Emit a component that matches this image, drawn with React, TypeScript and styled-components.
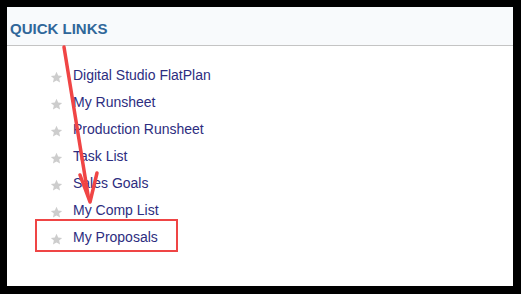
import React from 'react';
import styled, { createGlobalStyle } from 'styled-components';

const GlobalStyle = createGlobalStyle`
  html, body { margin: 0; padding: 0; background: #000; }
  body { font-family: "Liberation Sans", Arial, sans-serif; }
`;

const Frame = styled.div`
  width: 521px;
  height: 294px;
  box-sizing: border-box;
  padding: 7px 8px 8px 7px;
  background: #000;
`;

const Panel = styled.div`
  position: relative;
  height: 100%;
  background: #fff;
  display: flex;
  flex-direction: column;
`;

const Header = styled.div`
  height: 39px;
  background: #f8fafc;
  border-bottom: 1px solid #c4c4c4;
  display: flex;
  align-items: center;
  padding: 5px 0 0 3px;
  box-sizing: border-box;
`;

const Title = styled.h3`
  margin: 0;
  font-size: 15px;
  font-weight: bold;
  color: #30679a;
`;

const LinkList = styled.ul`
  list-style: none;
  margin: 0;
  padding: 21px 0 0 43px;
  display: flex;
  flex-direction: column;
  gap: 11px;
`;

const LinkRow = styled.li`
  display: flex;
  align-items: center;
  height: 16px;
  gap: 10px;
`;

const Star = styled.svg`
  width: 13px;
  height: 13px;
  flex: none;
  margin-top: 5px;
`;

const LinkText = styled.a`
  font-size: 14px;
  color: #2d2d80;
  text-decoration: none;
  cursor: pointer;
`;

const Highlight = styled.div`
  position: absolute;
  left: 28px;
  top: 212px;
  width: 143px;
  height: 33px;
  box-sizing: border-box;
  border: 2px solid #ef4545;
  pointer-events: none;
`;

const Overlay = styled.svg`
  position: absolute;
  left: 0;
  top: 0;
  width: 100%;
  height: 100%;
  pointer-events: none;
`;

const links = [
  'Digital Studio FlatPlan',
  'My Runsheet',
  'Production Runsheet',
  'Task List',
  'Sales Goals',
  'My Comp List',
  'My Proposals',
];

const StarIcon = () => (
  <Star viewBox="0 0 24 24">
    <path
      d="M12 1.5l3.1 7 7.4.6-5.6 4.9 1.7 7.4L12 17.5l-6.6 3.9 1.7-7.4L1.5 9.1l7.4-.6z"
      fill="#cdcdcd"
    />
  </Star>
);

export default function App() {
  return (
    <>
      <GlobalStyle />
      <Frame>
        <Panel>
          <Header>
            <Title>QUICK LINKS</Title>
          </Header>
          <LinkList>
            {links.map(l => (
              <LinkRow key={l}>
                <StarIcon />
                <LinkText>{l}</LinkText>
              </LinkRow>
            ))}
          </LinkList>
          <Highlight />
          <Overlay viewBox="0 0 506 279">
            <line x1="57" y1="40" x2="81" y2="188" stroke="#f04545" strokeWidth="3.5" strokeLinecap="round" />
            <path d="M73 168 L83 195 L90 166" fill="none" stroke="#f04545" strokeWidth="3.5" strokeLinecap="round" strokeLinejoin="round" />
          </Overlay>
        </Panel>
      </Frame>
    </>
  );
}
